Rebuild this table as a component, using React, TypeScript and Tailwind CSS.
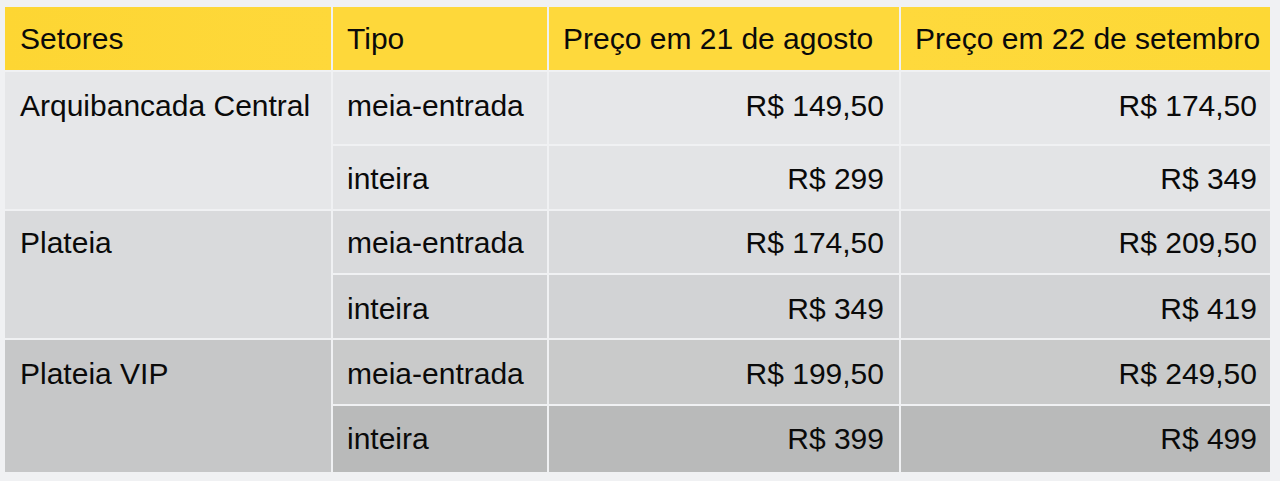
import React from "react";

type Row = { tipo: string; p1: string; p2: string; bg: string; h: string; pt: string };
type Group = { setor: string; bg: string; rows: Row[] };

const groups: Group[] = [
  {
    setor: "Arquibancada Central",
    bg: "bg-[#e6e7e9]",
    rows: [
      { tipo: "meia-entrada", p1: "R$ 149,50", p2: "R$ 174,50", bg: "bg-[#e6e7e9]", h: "h-[72px]", pt: "pt-[18px]" },
      { tipo: "inteira", p1: "R$ 299", p2: "R$ 349", bg: "bg-[#e3e4e6]", h: "h-[63px]", pt: "pt-[17px]" },
    ],
  },
  {
    setor: "Plateia",
    bg: "bg-[#d9dadc]",
    rows: [
      { tipo: "meia-entrada", p1: "R$ 174,50", p2: "R$ 209,50", bg: "bg-[#d9dadc]", h: "h-[62px]", pt: "pt-[16px]" },
      { tipo: "inteira", p1: "R$ 349", p2: "R$ 419", bg: "bg-[#d2d3d5]", h: "h-[63px]", pt: "pt-[18px]" },
    ],
  },
  {
    setor: "Plateia VIP",
    bg: "bg-[#c6c7c8]",
    rows: [
      { tipo: "meia-entrada", p1: "R$ 199,50", p2: "R$ 249,50", bg: "bg-[#c9caca]", h: "h-[64px]", pt: "pt-[18px]" },
      { tipo: "inteira", p1: "R$ 399", p2: "R$ 499", bg: "bg-[#b9baba]", h: "h-[66px]", pt: "pt-[17px]" },
    ],
  },
];

export default function App() {
  return (
    <div
      className="min-h-[481px] w-[1280px] bg-[#f0f1f3] pt-[5px] pl-[3px] text-[#0a0a0a] text-[30px] leading-[32px]"
      style={{ fontFamily: '"Liberation Sans", Arial, sans-serif' }}
    >
      <table className="border-separate border-spacing-[2px] table-fixed w-[1269px]">
        <colgroup>
          <col className="w-[326px]" />
          <col className="w-[214px]" />
          <col className="w-[350px]" />
          <col className="w-[369px]" />
        </colgroup>
        <thead>
          <tr className="h-[63px]">
            <th className="bg-gradient-to-r from-[#fdd633] to-[#fed83a] text-left font-normal align-top pt-[16px] pl-[15px]">Setores</th>
            <th className="bg-[#fed83a] text-left font-normal align-top pt-[16px] pl-[14px]">Tipo</th>
            <th className="bg-[#fed93c] text-left font-normal align-top pt-[16px] pl-[14px]">Preço em 21 de agosto</th>
            <th className="bg-gradient-to-r from-[#fed93c] to-[#fdd835] text-left font-normal align-top pt-[16px] pl-[14px]">Preço em 22 de setembro</th>
          </tr>
        </thead>
        <tbody>
          {groups.map((g) =>
            g.rows.map((r, i) => (
              <tr key={g.setor + r.tipo} className={r.h}>
                {i === 0 && (
                  <td rowSpan={2} className={`${g.bg} align-top ${r.pt} pl-[15px]`}>
                    {g.setor}
                  </td>
                )}
                <td className={`${r.bg} align-top ${r.pt} pl-[14px]`}>{r.tipo}</td>
                <td className={`${r.bg} align-top ${r.pt} pr-[15px] text-right`}>{r.p1}</td>
                <td className={`${r.bg} align-top ${r.pt} pr-[13px] text-right`}>{r.p2}</td>
              </tr>
            ))
          )}
        </tbody>
      </table>
    </div>
  );
}
